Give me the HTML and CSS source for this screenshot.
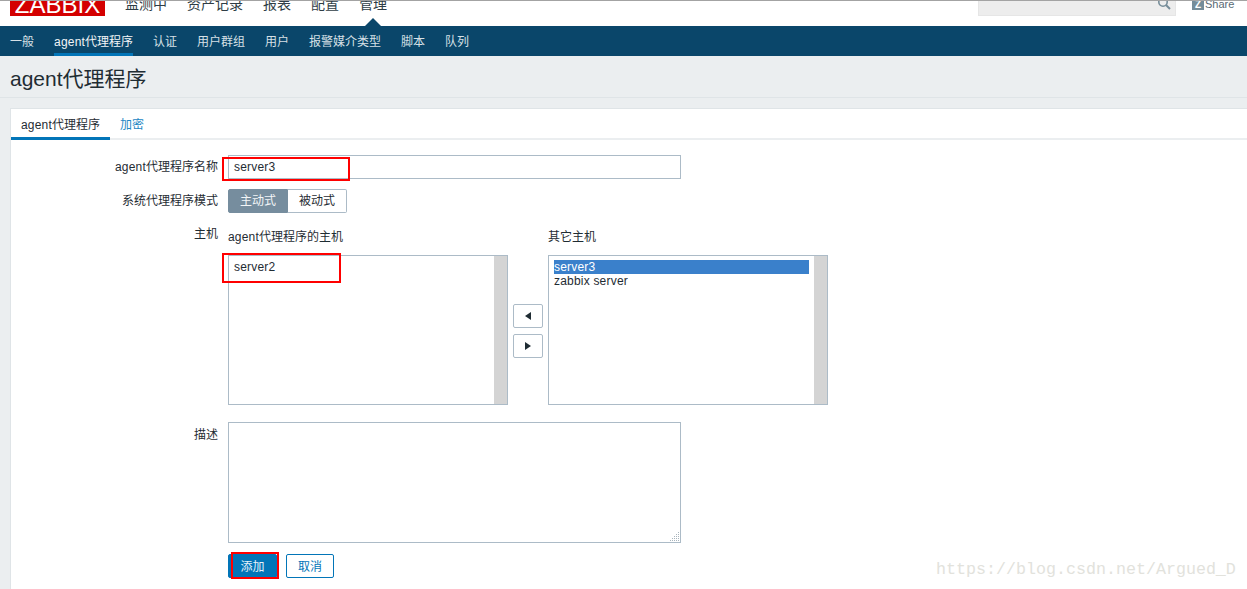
FILE: index.html
```html
<!DOCTYPE html>
<html lang="zh">
<head>
<meta charset="utf-8">
<title>agent代理程序</title>
<link rel="stylesheet" href="styles.css">
</head>
<body>
<header class="top">
  <div class="top-inner">
    <div class="logo">ZABBIX</div>
    <nav class="main-nav">
      <a>监测中</a><a>资产记录</a><a>报表</a><a>配置</a><a class="current">管理</a>
    </nav>
    <div class="search">
      <svg class="search-icon" width="14" height="14" viewBox="0 0 14 14"><circle cx="6" cy="5" r="4.2" fill="none" stroke="#768d99" stroke-width="1.6"/><path d="M9 8l4 4" stroke="#768d99" stroke-width="2"/></svg>
    </div>
    <a class="share"><span class="share-icon">Z</span>Share</a>
  </div>
</header>
<nav class="sub-nav">
  <a>一般</a><a class="active"><span class="latin">agent</span>代理程序</a><a>认证</a><a>用户群组</a><a>用户</a><a>报警媒介类型</a><a>脚本</a><a>队列</a>
</nav>
<main class="page">
  <h1 class="title">agent代理程序</h1>
  <section class="card">
    <div class="tabs">
      <a class="tab tab-active"><span class="latin">agent</span>代理程序</a><a class="tab">加密</a>
    </div>
    <form class="form">
      <div class="row row-name">
        <label class="label"><span class="latin">agent</span>代理程序名称</label>
        <input class="text-input" type="text" value="server3">
      </div>
      <div class="row row-mode">
        <label class="label label-mode">系统代理程序模式</label>
        <div class="segmented"><span class="seg seg-on">主动式</span><span class="seg">被动式</span></div>
      </div>
      <div class="row row-hosts">
        <label class="label label-hosts">主机</label>
        <div class="hosts">
          <div class="host-col">
            <div class="host-title"><span class="latin">agent</span>代理程序的主机</div>
            <div class="listbox">
              <div class="list-items"><div class="item">server2</div></div>
              <div class="scroll"></div>
            </div>
          </div>
          <div class="move">
            <button class="move-btn" type="button"><span class="arrow arrow-left"></span></button>
            <button class="move-btn" type="button"><span class="arrow arrow-right"></span></button>
          </div>
          <div class="host-col">
            <div class="host-title">其它主机</div>
            <div class="listbox">
              <div class="list-items"><div class="item item-selected">server3</div><div class="item">zabbix server</div></div>
              <div class="scroll"></div>
            </div>
          </div>
        </div>
      </div>
      <div class="row row-desc">
        <label class="label label-desc">描述</label>
        <div class="desc-wrap">
          <textarea class="desc"></textarea>
          <svg class="grip" width="10" height="10" viewBox="0 0 10 10" fill="#a9b5bd"><rect x="8" y="0" width="1" height="1"/><rect x="6" y="2" width="1" height="1"/><rect x="8" y="2" width="1" height="1"/><rect x="4" y="4" width="1" height="1"/><rect x="6" y="4" width="1" height="1"/><rect x="8" y="4" width="1" height="1"/><rect x="2" y="6" width="1" height="1"/><rect x="4" y="6" width="1" height="1"/><rect x="6" y="6" width="1" height="1"/><rect x="8" y="6" width="1" height="1"/><rect x="0" y="8" width="1" height="1"/><rect x="2" y="8" width="1" height="1"/><rect x="4" y="8" width="1" height="1"/><rect x="6" y="8" width="1" height="1"/><rect x="8" y="8" width="1" height="1"/></svg>
        </div>
      </div>
      <div class="row row-actions">
        <span class="label"></span>
        <div class="actions"><button class="btn btn-primary" type="button">添加</button><button class="btn btn-alt" type="button">取消</button></div>
      </div>
    </form>
  </section>
</main>
<div class="mark mark-name"></div>
<div class="mark mark-host"></div>
<div class="mark mark-add"></div>
<div class="watermark">https://blog.csdn.net/Argued_D</div>
</body>
</html>
```
FILE: styles.css
```css
* { box-sizing: border-box; }
html, body { margin: 0; height: 100%; overflow: hidden; }
body {
  position: relative;
  background: #ebeef0;
  color: #1f2c33;
  font: 12px/14px "Liberation Sans", "Noto Sans CJK SC", sans-serif;
}
a { text-decoration: none; }
.latin { letter-spacing: 0.2px; }

.top { height: 26px; background: #fff; border-top: 1px solid #a3a3a3; overflow: hidden; }
.top-inner { display: flex; align-items: flex-start; margin-top: -9px; height: 34px; }
.logo {
  width: 95px; height: 24px; margin-left: 10px;
  background: #d40000; color: #fff;
  font-size: 24px; line-height: 25px; text-align: center;
  overflow: hidden;
}
.main-nav { display: flex; gap: 20px; margin-left: 20px; font-size: 14px; line-height: 24px; color: #2f3d45; }
.main-nav a { position: relative; height: 34px; display: block; }
.main-nav .current::after {
  content: ""; position: absolute; left: 50%; bottom: 0; margin-left: -8px;
  border: 8px solid transparent; border-top: 0; border-bottom-color: #0a466a;
}
.search {
  position: relative; width: 198px; height: 24px; margin-left: 591px;
  background: #ededed; border: 1px solid #e6e6e6;
}
.search-icon { position: absolute; right: 4px; top: 4px; }
.share { display: flex; align-items: flex-start; margin-left: 16px; padding-top: 5px; font-size: 11px; line-height: 14px; color: #5a6a74; }
.share-icon {
  width: 12px; height: 10px; margin-top: 3px; margin-right: 1px;
  background: #768d99; color: #fff; font: bold 10px/10px "Liberation Sans", sans-serif; text-align: center;
}

.sub-nav { display: flex; gap: 20px; height: 30px; padding-left: 10px; background: #0a466a; color: #d6e0e6; }
.sub-nav a { display: block; line-height: 32px; height: 30px; white-space: nowrap; }
.sub-nav .active { width: 79px; color: #f2f5f7; border-bottom: 3px solid #0275b8; }

.page { padding-left: 10px; }
.title {
  margin: 0 0 0 -10px; padding: 11px 0 0 10px; height: 42px;
  border-bottom: 1px solid #dfe4e7;
  font-size: 21px; line-height: 24px; font-weight: 400; color: #1f2c33;
}
.card {
  margin-top: 10px; height: 481px;
  background: #fff; border: 1px solid #dfe4e7; border-right: 0; border-bottom: 0;
}
.tabs { display: flex; height: 31px; border-bottom: 2px solid #ebeef0; }
.tab { display: block; height: 31px; padding: 0 10px; line-height: 33px; color: #1e87c4; }
.tab-active { width: 99px; color: #1f2c33; border-bottom: 3px solid #0275b8; white-space: nowrap; }

.form { padding-top: 15px; }
.row { display: flex; align-items: flex-start; gap: 10px; }
.label { display: block; flex: 0 0 207px; text-align: right; line-height: 24px; color: #1f2c33; }
.label-mode { height: 24px; line-height: 25px; }
.row-mode { margin-top: 10px; }
.row-hosts { margin-top: 10px; }
.row-desc { margin-top: 17px; }
.row-actions { margin-top: 11px; }
.label-hosts { line-height: 22px; }
.label-desc { line-height: 26px; }

.text-input {
  width: 453px; height: 24px; padding: 0 5px;
  border: 1px solid #acbbc7; border-radius: 0; outline: 0;
  font: inherit; letter-spacing: 0.2px; color: #1f2c33; background: #fff;
}
.segmented { display: flex; height: 24px; }
.seg {
  display: block; width: 59px; line-height: 23px; text-align: center;
  border: 1px solid #acbbc7; border-left: 0; border-radius: 0 2px 2px 0; color: #1f2c33;
}
.seg-on { width: 60px; background: #768d9e; border: 1px solid #768d9e; border-radius: 2px 0 0 2px; color: #f2f5f7; }

.hosts { display: flex; align-items: flex-start; }
.host-col { width: 280px; }
.host-title { height: 32px; padding-top: 7px; line-height: 14px; white-space: nowrap; }
.listbox { display: flex; width: 280px; height: 150px; border: 1px solid #acbbc7; background: #fff; }
.list-items { flex: 1; padding: 4px 5px; }
.item { height: 14px; line-height: 14px; letter-spacing: 0.2px; color: #1f2c33; }
.item-selected { background: #3a80cb; color: #fff; }
.scroll { width: 13px; background: #d4d4d4; }

.move { width: 40px; padding: 81px 5px 0; display: flex; flex-direction: column; gap: 6px; }
.move-btn {
  display: flex; align-items: center; justify-content: center;
  width: 30px; height: 24px; padding: 0;
  background: #fff; border: 1px solid #acbbc7; border-radius: 2px;
}
.arrow { width: 0; height: 0; border: 4px solid transparent; }
.arrow-left { border-left: 0; border-right: 6px solid #1f2c33; }
.arrow-right { border-right: 0; border-left: 6px solid #1f2c33; }

.desc-wrap { position: relative; width: 453px; height: 121px; }
.desc {
  display: block; width: 100%; height: 100%; margin: 0; padding: 5px;
  border: 1px solid #acbbc7; border-radius: 0; outline: 0; background: #fff;
  font: inherit; resize: none;
}
.grip { position: absolute; right: 1px; bottom: 1px; }
.actions { display: flex; gap: 9px; }
.btn { width: 48px; height: 24px; padding: 1px 0 0; font: inherit; border-radius: 2px; border: 1px solid #0275b8; }
.btn-primary { width: 49px; background: #0275b8; color: #e6f2f9; }
.btn-alt { background: #fff; color: #0275b8; }

.mark { position: absolute; border: 2px solid #f00; }
.mark-name { left: 222px; top: 157px; width: 128px; height: 24px; }
.mark-host { left: 222px; top: 253px; width: 119px; height: 30px; }
.mark-add { left: 231px; top: 552px; width: 48px; height: 27px; }
.watermark {
  position: absolute; left: 936px; top: 560px;
  font: 16.67px/20px "Liberation Mono", monospace; color: #e2e2dc; white-space: nowrap;
}
```
